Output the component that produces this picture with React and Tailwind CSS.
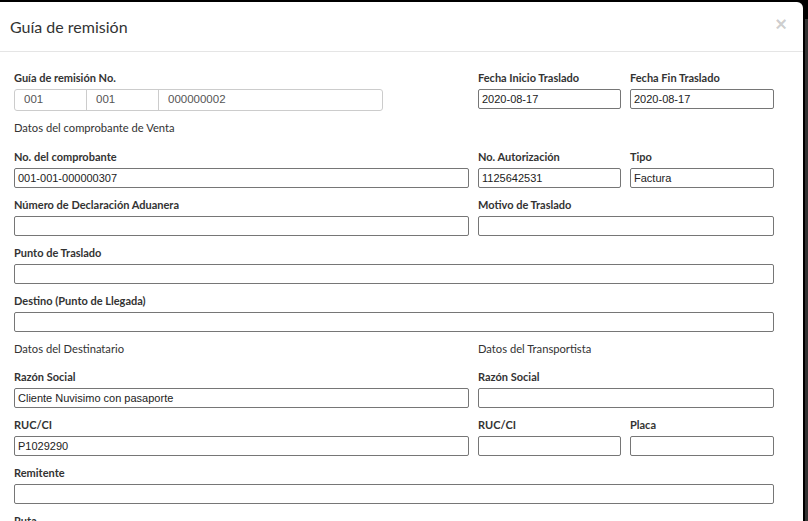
import React from "react";

const label = "block h-[16px] text-[11px] leading-[16px] font-bold text-[#333] whitespace-nowrap";
const input =
  "mt-[3px] flex h-[20px] items-center rounded-[2px] border border-[#767676] bg-white px-[3px] text-[11px] text-[#222]";

function Field({ title, value, className = "" }) {
  return (
    <div className={className}>
      <span className={label}>{title}</span>
      <div className={input} style={{ fontFamily: '"Liberation Sans", Arial, sans-serif' }}>
        {value}
      </div>
    </div>
  );
}

export default function App() {
  return (
    <div
      className="flex h-[521px] w-[808px] overflow-hidden bg-black"
      style={{ fontFamily: "Lato, 'Open Sans', sans-serif" }}
    >
      {/* modal */}
      <div className="mt-[2px] h-[519px] w-[803px] shrink-0 overflow-hidden rounded-tr-[6px] bg-white">
        <div className="flex h-[50px] items-center justify-between border-b border-[#e5e5e5] pl-[10px] pr-[16px]">
          <h4 className="text-[16px] text-[#333]">Guía de remisión</h4>
          <span
            className="-mt-[6px] text-[20px] font-bold leading-none text-black/20"
            style={{ fontFamily: '"Liberation Sans", Arial, sans-serif' }}
          >
            ×
          </span>
        </div>

        <div className="flex flex-col gap-y-[9px] px-[14px] pt-[18px]">
          {/* row 1 */}
          <div className="grid grid-cols-[455px_143px_144px] gap-x-[9px]">
            <div>
              <span className={label}>Guía de remisión No.</span>
              <div
                className="mt-[3px] flex h-[22px] w-[369px] rounded-[3px] border border-[#ccc] text-[11.5px] text-[#555]"
                style={{ fontFamily: '"Liberation Sans", Arial, sans-serif' }}
              >
                <div className="flex w-[72px] items-center border-r border-[#ccc] pl-[9px]">001</div>
                <div className="flex w-[72px] items-center border-r border-[#ccc] pl-[9px]">001</div>
                <div className="flex flex-1 items-center pl-[9px]">000000002</div>
              </div>
            </div>
            <Field title="Fecha Inicio Traslado" value="2020-08-17" />
            <Field title="Fecha Fin Traslado" value="2020-08-17" />
          </div>

          <div className="mb-[4px] h-[16px] text-[11.2px] leading-[16px] text-[#333]">
            Datos del comprobante de Venta
          </div>

          <div className="grid grid-cols-[455px_143px_144px] gap-x-[9px]">
            <Field title="No. del comprobante" value="001-001-000000307" />
            <Field title="No. Autorización" value="1125642531" />
            <Field title="Tipo" value="Factura" />
          </div>

          <div className="grid grid-cols-[455px_143px_144px] gap-x-[9px]">
            <Field title="Número de Declaración Aduanera" />
            <Field title="Motivo de Traslado" className="col-span-2" />
          </div>

          <Field title="Punto de Traslado" className="w-[760px]" />
          <Field title="Destino (Punto de Llegada)" className="w-[760px]" />

          <div className="mb-[3px] grid grid-cols-[455px_296px] gap-x-[9px] text-[11.2px] leading-[16px] text-[#333]">
            <span>Datos del Destinatario</span>
            <span>Datos del Transportista</span>
          </div>

          <div className="grid grid-cols-[455px_296px] gap-x-[9px]">
            <Field title="Razón Social" value="Cliente Nuvisimo con pasaporte" />
            <Field title="Razón Social" />
          </div>

          <div className="grid grid-cols-[455px_143px_144px] gap-x-[9px]">
            <Field title="RUC/CI" value="P1029290" />
            <Field title="RUC/CI" />
            <Field title="Placa" />
          </div>

          <Field title="Remitente" className="w-[760px]" />
          <Field title="Ruta" className="w-[760px]" />
        </div>
      </div>

      {/* backdrop edge */}
      <div className="w-[2px] shrink-0 bg-black" />
      <div className="flex w-[3px] shrink-0 flex-col">
        <div className="h-[19px] bg-black" />
        <div className="flex-1 bg-[#333]" />
      </div>
    </div>
  );
}
